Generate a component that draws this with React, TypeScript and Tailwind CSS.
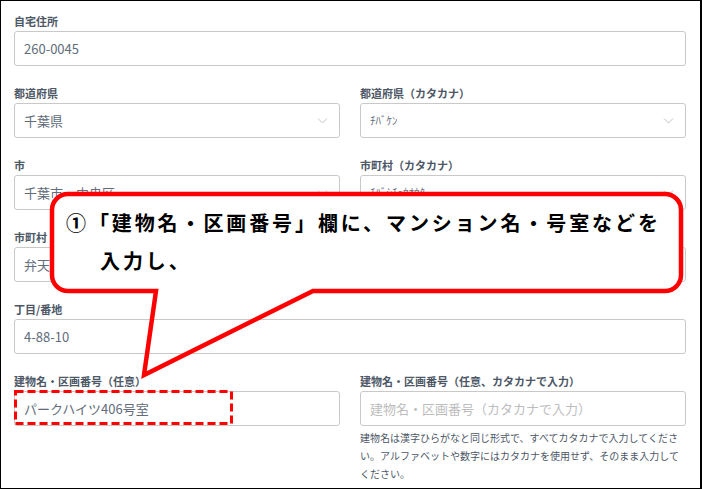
import React from 'react';

const jp = { fontFamily: '"Noto Sans CJK JP", "Noto Sans", sans-serif' };

function Chevron() {
  return (
    <svg className="absolute right-[11px] top-1/2 -translate-y-1/2" width="11" height="7" viewBox="0 0 11 7">
      <polyline points="1,1 5.5,5.5 10,1" fill="none" stroke="#c4c4c4" strokeWidth="1" />
    </svg>
  );
}

function Field({
  label,
  value,
  placeholder,
  select,
  small,
}: {
  label: string;
  value?: string;
  placeholder?: string;
  select?: boolean;
  small?: boolean;
}) {
  return (
    <div className="flex flex-col">
      <div className="h-[16px] mb-[2px] text-[11px] leading-[16px] font-bold text-[#4d5766] whitespace-nowrap">{label}</div>
      <div className="relative h-[35px] border border-[#c9c9c9] rounded-[3px] bg-white flex items-center pl-[9px]">
        {value ? (
          <span className={`${small ? 'text-[11px]' : 'text-[13px]'} text-[#616b7a] whitespace-nowrap`}>{value}</span>
        ) : (
          <span className="text-[13px] text-[#bdbdbd] whitespace-nowrap">{placeholder}</span>
        )}
        {select && <Chevron />}
      </div>
    </div>
  );
}

export default function App() {
  return (
    <div
      className="relative w-[702px] h-[489px] overflow-hidden bg-white border-l border-t border-b border-r-2 border-black pl-[13px] pr-[14px] pt-[12px]"
      style={jp}
    >
      {/* form */}
      <div className="flex flex-col gap-[19px]">
        <Field label="自宅住所" value="260-0045" />
        <div className="grid grid-cols-2 gap-x-[20px]">
          <Field label="都道府県" value="千葉県" select />
          <Field label="都道府県（カタカナ）" value="ﾁﾊﾞｹﾝ" select small />
        </div>
        <div className="grid grid-cols-2 gap-x-[20px]">
          <Field label="市" value="千葉市　中央区" select />
          <Field label="市町村（カタカナ）" value="ﾁﾊﾞｼﾁｭｳｵｳｸ" select small />
        </div>
        <div className="grid grid-cols-2 gap-x-[20px]">
          <Field label="市町村" value="弁天" />
          <Field label="市町村（カタカナ）" value="ﾍﾞﾝﾃﾝ" small />
        </div>
        <Field label="丁目/番地" value="4-88-10" />
        <div className="grid grid-cols-2 gap-x-[20px]">
          <Field label="建物名・区画番号（任意）" value="パークハイツ406号室" />
          <div className="flex flex-col">
            <Field label="建物名・区画番号（任意、カタカナで入力）" placeholder="建物名・区画番号（カタカナで入力）" />
            <p className="mt-[3px] text-[10px] leading-[18px] text-[#4d5766]">
              建物名は漢字ひらがなと同じ形式で、すべてカタカナで入力してください。アルファベットや数字にはカタカナを使用せず、そのまま入力してください。
            </p>
          </div>
        </div>
      </div>

      {/* callout annotation */}
      <svg className="absolute left-[-1px] top-[-1px]" width="702" height="489" viewBox="0 0 702 489">
        <rect x="52" y="194" width="629" height="97" rx="16" fill="white" />
        <path
          d="M 68 194 H 665 A 16 16 0 0 1 681 210 V 275 A 16 16 0 0 1 665 291 H 313 L 144 375 L 156 291 H 68 A 16 16 0 0 1 52 275 V 210 A 16 16 0 0 1 68 194 Z"
          fill="none"
          stroke="#ff0000"
          strokeWidth="4.5"
          strokeLinejoin="miter"
        />
        <rect x="15.5" y="391.5" width="216" height="32" fill="none" stroke="#ff0000" strokeWidth="3" strokeDasharray="8 4" />
      </svg>
      <div className="absolute left-[65px] top-[203px] text-[20px] leading-[38px] font-bold tracking-[2.9px] text-black whitespace-nowrap">
        <div>①「建物名・区画番号」欄に、マンション名・号室などを</div>
        <div className="pl-[34px]">入力し、</div>
      </div>
    </div>
  );
}
